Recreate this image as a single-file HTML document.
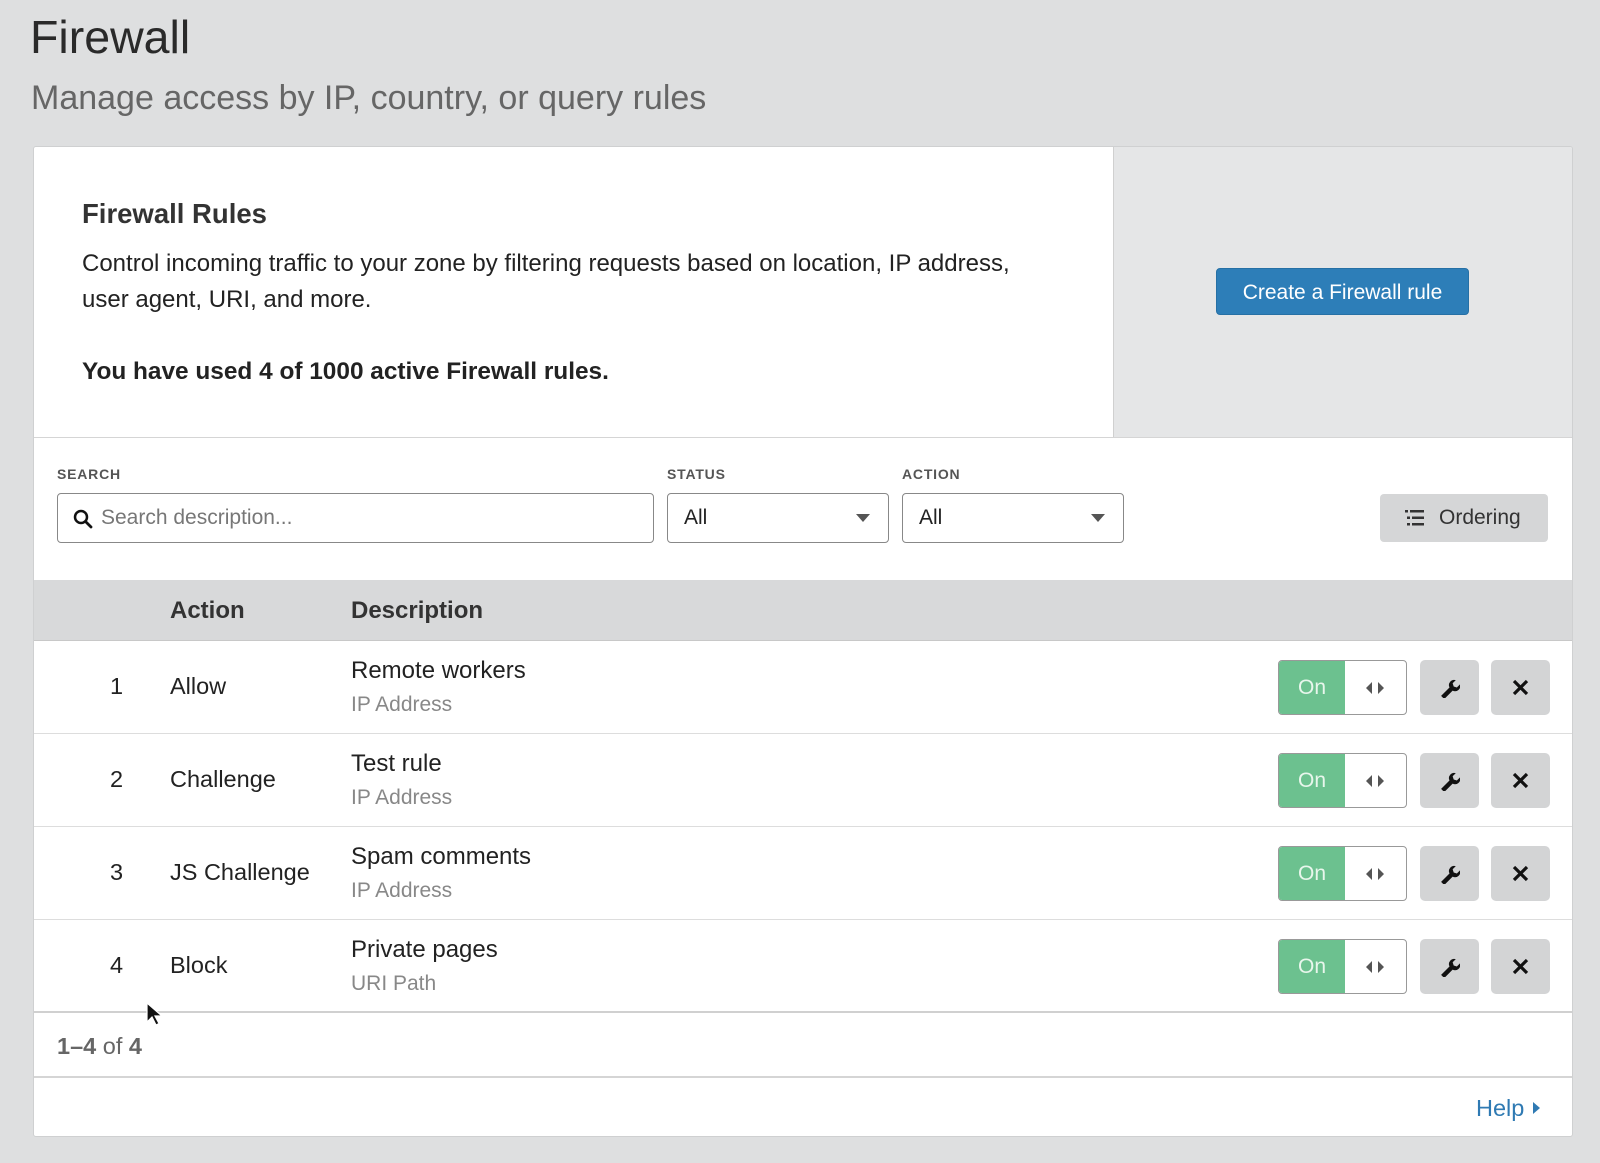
<!DOCTYPE html>
<html><head><style>
*{box-sizing:border-box;margin:0;padding:0}
body{width:1600px;height:1163px;background:#dedfe0;font-family:"Liberation Sans",sans-serif;color:#222;position:relative;overflow:hidden}
.a{position:absolute}
.card{left:33px;top:146px;width:1540px;height:991px;background:#fff;border:1px solid #cfd0d1;border-radius:3px;overflow:hidden}
.lbl{font-size:14px;font-weight:bold;color:#555;letter-spacing:.8px}
.inp{border:1px solid #888;border-radius:4px;background:#fff;height:50px}
.row{left:0;width:1540px;height:93px;border-bottom:1px solid #ddd}
.num{left:70px;width:25px;text-align:center;font-size:23.5px;top:32px}
.act{left:136px;font-size:23.5px;top:32px}
.d1{left:317px;top:16px;font-size:24px}
.d2{left:317px;top:52px;font-size:21px;color:#888}
.tog{left:1244px;top:19px;width:129px;height:55px;border:1px solid #999;border-radius:4px;overflow:hidden;background:#fff}
.tog .g{position:absolute;left:0;top:0;width:66px;height:100%;background:#6cc18f;color:#e8f6ec;font-size:21px;text-align:center;line-height:53px}
.tog .ar{position:absolute;left:66px;right:0;top:0;height:100%}
.btn{top:19px;width:59px;height:55px;background:#d3d4d5;border-radius:5px}
</style></head><body>
<div class="a" style="left:30px;top:10px;font-size:46.5px;color:#2a2a2a">Firewall</div>
<div class="a" style="left:31px;top:79px;font-size:34px;color:#666">Manage access by IP, country, or query rules</div>
<div class="a card">
 <div class="a" style="left:1079px;top:0;width:461px;height:291px;background:#e5e6e7;border-left:1px solid #d0d0d0"></div>
 <div class="a" style="left:0;top:290px;width:1540px;height:1px;background:#d5d5d5"></div>
 <div class="a" style="left:48px;top:51px;font-size:27.5px;font-weight:bold;color:#333">Firewall Rules</div>
 <div class="a" style="left:48px;top:99px;font-size:24px;line-height:36px;color:#222;width:960px">Control incoming traffic to your zone by filtering requests based on location, IP address, user agent, URI, and more.</div>
 <div class="a" style="left:48px;top:211px;font-size:24.4px;font-weight:bold;color:#222">You have used 4 of 1000 active Firewall rules.</div>
 <div class="a" style="left:1182px;top:121px;width:253px;height:47px;background:#2d7eb8;border-radius:4px;color:#fff;font-size:21px;text-align:center;line-height:47px;border:1px solid #2670a5">Create a Firewall rule</div>
 <div class="a lbl" style="left:23px;top:319px">SEARCH</div>
 <div class="a lbl" style="left:633px;top:319px">STATUS</div>
 <div class="a lbl" style="left:868px;top:319px">ACTION</div>
 <div class="a inp" style="left:23px;top:346px;width:597px">
  <svg class="a" style="left:15px;top:15px" width="20" height="20" viewBox="0 0 20 20"><circle cx="8" cy="8" r="6" fill="none" stroke="#111" stroke-width="2.5"/><path d="M12.5 12.5L18 18" stroke="#111" stroke-width="2.8" stroke-linecap="round"/></svg>
  <div class="a" style="left:43px;top:12px;font-size:21px;color:#777">Search description...</div>
 </div>
 <div class="a inp" style="left:633px;top:346px;width:222px"><div class="a" style="left:16px;top:12px;font-size:21px">All</div><div class="a" style="left:188px;top:20px;border:7px solid transparent;border-top:8px solid #555;border-bottom:0"></div></div>
 <div class="a inp" style="left:868px;top:346px;width:222px"><div class="a" style="left:16px;top:12px;font-size:21px">All</div><div class="a" style="left:188px;top:20px;border:7px solid transparent;border-top:8px solid #555;border-bottom:0"></div></div>
 <div class="a" style="left:1346px;top:347px;width:168px;height:48px;background:#d5d6d7;border-radius:4px">
  <svg class="a" style="left:25px;top:15px" width="20" height="18" viewBox="0 0 20 18"><g fill="#333"><rect x="0" y="1" width="3" height="2.5"/><rect x="5" y="1" width="14" height="2.5"/><rect x="2" y="7.5" width="3" height="2.5"/><rect x="7" y="7.5" width="12" height="2.5"/><rect x="2" y="14" width="3" height="2.5"/><rect x="7" y="14" width="12" height="2.5"/></g></svg>
  <div class="a" style="left:59px;top:12px;font-size:21px;color:#333">Ordering</div>
 </div>
 <div class="a" style="left:0;top:433px;width:1540px;height:61px;background:#d8d9da;border-bottom:1px solid #c8c8c8">
  <div class="a" style="left:136px;top:17px;font-size:24px;font-weight:bold;color:#333">Action</div>
  <div class="a" style="left:317px;top:17px;font-size:24px;font-weight:bold;color:#333">Description</div>
 </div>
 <div class="a row" style="top:494px"><div class="a num">1</div><div class="a act">Allow</div><div class="a d1">Remote workers</div><div class="a d2">IP Address</div><div class="a tog"><div class="g">On</div><div class="ar"><svg class="a" style="left:20px;top:20px" width="20" height="14" viewBox="0 0 20 14"><path d="M7 1L1 7l6 6zM13 1l6 6-6 6z" fill="#555"/></svg></div></div><div class="a btn" style="left:1386px"><svg class="a" style="left:19px;top:17px" width="21" height="21" viewBox="0 0 20 20"><path d="M2 18l8-8a5 5 0 0 1 6-7l-3 3 1 3 3 1 3-3a5 5 0 0 1-7 6l-8 8z" fill="#111"/></svg></div><div class="a btn" style="left:1457px"><svg class="a" style="left:21px;top:19px" width="17" height="17" viewBox="0 0 17 17"><path d="M2 2L15 15M15 2L2 15" stroke="#111" stroke-width="3.2"/></svg></div></div>
 <div class="a row" style="top:587px"><div class="a num">2</div><div class="a act">Challenge</div><div class="a d1">Test rule</div><div class="a d2">IP Address</div><div class="a tog"><div class="g">On</div><div class="ar"><svg class="a" style="left:20px;top:20px" width="20" height="14" viewBox="0 0 20 14"><path d="M7 1L1 7l6 6zM13 1l6 6-6 6z" fill="#555"/></svg></div></div><div class="a btn" style="left:1386px"><svg class="a" style="left:19px;top:17px" width="21" height="21" viewBox="0 0 20 20"><path d="M2 18l8-8a5 5 0 0 1 6-7l-3 3 1 3 3 1 3-3a5 5 0 0 1-7 6l-8 8z" fill="#111"/></svg></div><div class="a btn" style="left:1457px"><svg class="a" style="left:21px;top:19px" width="17" height="17" viewBox="0 0 17 17"><path d="M2 2L15 15M15 2L2 15" stroke="#111" stroke-width="3.2"/></svg></div></div>
 <div class="a row" style="top:680px"><div class="a num">3</div><div class="a act">JS Challenge</div><div class="a d1">Spam comments</div><div class="a d2">IP Address</div><div class="a tog"><div class="g">On</div><div class="ar"><svg class="a" style="left:20px;top:20px" width="20" height="14" viewBox="0 0 20 14"><path d="M7 1L1 7l6 6zM13 1l6 6-6 6z" fill="#555"/></svg></div></div><div class="a btn" style="left:1386px"><svg class="a" style="left:19px;top:17px" width="21" height="21" viewBox="0 0 20 20"><path d="M2 18l8-8a5 5 0 0 1 6-7l-3 3 1 3 3 1 3-3a5 5 0 0 1-7 6l-8 8z" fill="#111"/></svg></div><div class="a btn" style="left:1457px"><svg class="a" style="left:21px;top:19px" width="17" height="17" viewBox="0 0 17 17"><path d="M2 2L15 15M15 2L2 15" stroke="#111" stroke-width="3.2"/></svg></div></div>
 <div class="a row" style="top:773px;border-bottom:2px solid #d0d0d0"><div class="a num">4</div><div class="a act">Block</div><div class="a d1">Private pages</div><div class="a d2">URI Path</div><div class="a tog"><div class="g">On</div><div class="ar"><svg class="a" style="left:20px;top:20px" width="20" height="14" viewBox="0 0 20 14"><path d="M7 1L1 7l6 6zM13 1l6 6-6 6z" fill="#555"/></svg></div></div><div class="a btn" style="left:1386px"><svg class="a" style="left:19px;top:17px" width="21" height="21" viewBox="0 0 20 20"><path d="M2 18l8-8a5 5 0 0 1 6-7l-3 3 1 3 3 1 3-3a5 5 0 0 1-7 6l-8 8z" fill="#111"/></svg></div><div class="a btn" style="left:1457px"><svg class="a" style="left:21px;top:19px" width="17" height="17" viewBox="0 0 17 17"><path d="M2 2L15 15M15 2L2 15" stroke="#111" stroke-width="3.2"/></svg></div></div>
 <div class="a" style="left:23px;top:886px;font-size:23.5px;color:#666"><b>1–4</b> of <b>4</b></div>
 <div class="a" style="left:0;top:929px;width:1540px;height:2px;background:#d5d5d5"></div>
 <div class="a" style="left:1442px;top:948px;font-size:23.5px;color:#2f7ab3">Help</div>
 <div class="a" style="left:1499px;top:955px;border:6px solid transparent;border-left:7px solid #2f7ab3;border-right:0;height:0;width:0"></div>
</div>
<svg class="a" style="left:146px;top:1002px" width="16" height="24" viewBox="0 0 16 24"><path d="M1 1v19l5-5 4 8 3-1.5-4-7.5h7z" fill="#111" stroke="#fff" stroke-width="1.2"/></svg>
</body></html>
